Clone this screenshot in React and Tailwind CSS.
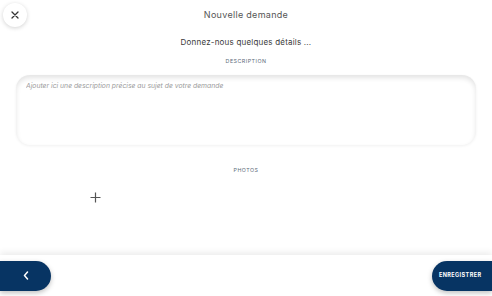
import {useState} from 'react';

export default function App() {
	const [description,setDescription] = useState('')

	return (
		<div className="w-[492px] h-[296px] bg-white flex flex-col overflow-hidden font-['Inter',sans-serif]">
			{/* header */}
			<div className="flex items-center h-[30px] px-[3px]">
				<button className="w-[24px] h-[24px] rounded-full bg-white shadow-[0_1px_4px_rgba(0,0,0,0.18)] flex items-center justify-center">
					<svg width="8" height="8" viewBox="0 0 8 8" stroke="#333" strokeWidth="1.3" strokeLinecap="round">
						<path d="M1 1 L7 7 M7 1 L1 7"/>
					</svg>
				</button>
				<p className="flex-1 text-center text-[9px] leading-[10px] text-[#555] tracking-[0.3px] pr-[24px]">Nouvelle demande</p>
			</div>

			<p className="text-center text-[8px] leading-[10px] text-[#3a3a3a] mt-[7px] tracking-[0.2px]">Donnez-nous quelques détails ...</p>

			<p className="text-center text-[5.3px] leading-[8px] text-[#5d6a7a] tracking-[0.5px] mt-[10px]">DESCRIPTION</p>

			<div className="mx-[16px] mt-[10px] h-[70px] rounded-[14px] bg-white shadow-[inset_0_3px_5px_rgba(0,0,0,0.11),0_1px_3px_rgba(0,0,0,0.06)] px-[10px] py-[6px]">
				<textarea
				value={description}
				onChange={(e)=>setDescription(e.target.value)}
				placeholder="Ajouter ici une description précise au sujet de votre demande"
				className="w-full h-full resize-none outline-none bg-transparent text-[6.8px] leading-[10px] italic placeholder:text-[#9a9a9a] text-[#333]"/>
			</div>

			<p className="text-center text-[5.3px] leading-[8px] text-[#5d6a7a] tracking-[0.5px] mt-[21px]">PHOTOS</p>

			<div className="flex pl-[90px] mt-[18px]">
				<svg width="11" height="11" viewBox="0 0 11 11" stroke="#555" strokeWidth="1.2">
					<path d="M5.5 0.5 V10.5 M0.5 5.5 H10.5"/>
				</svg>
			</div>

			<div className="flex-1"/>

			{/* bottom bar */}
			<div className="h-[41px] bg-white shadow-[0_-3px_6px_rgba(0,0,0,0.07)] flex items-center justify-between">
				<button className="w-[51px] h-[30px] bg-[#073463] rounded-r-full flex items-center justify-center shadow-[0_2px_5px_rgba(0,0,0,0.25)]">
					<svg width="6" height="9" viewBox="0 0 6 9" fill="none" stroke="white" strokeWidth="1.5" strokeLinecap="round" strokeLinejoin="round">
						<path d="M4.5 1 L1.5 4.5 L4.5 8"/>
					</svg>
				</button>
				<button className="w-[60px] h-[30px] bg-[#073463] rounded-l-full flex items-center pl-[7px] shadow-[0_2px_5px_rgba(0,0,0,0.25)]">
					<span className="text-[5.5px] font-bold text-white tracking-[0.4px]">ENREGISTRER</span>
				</button>
			</div>
		</div>
	)
}
